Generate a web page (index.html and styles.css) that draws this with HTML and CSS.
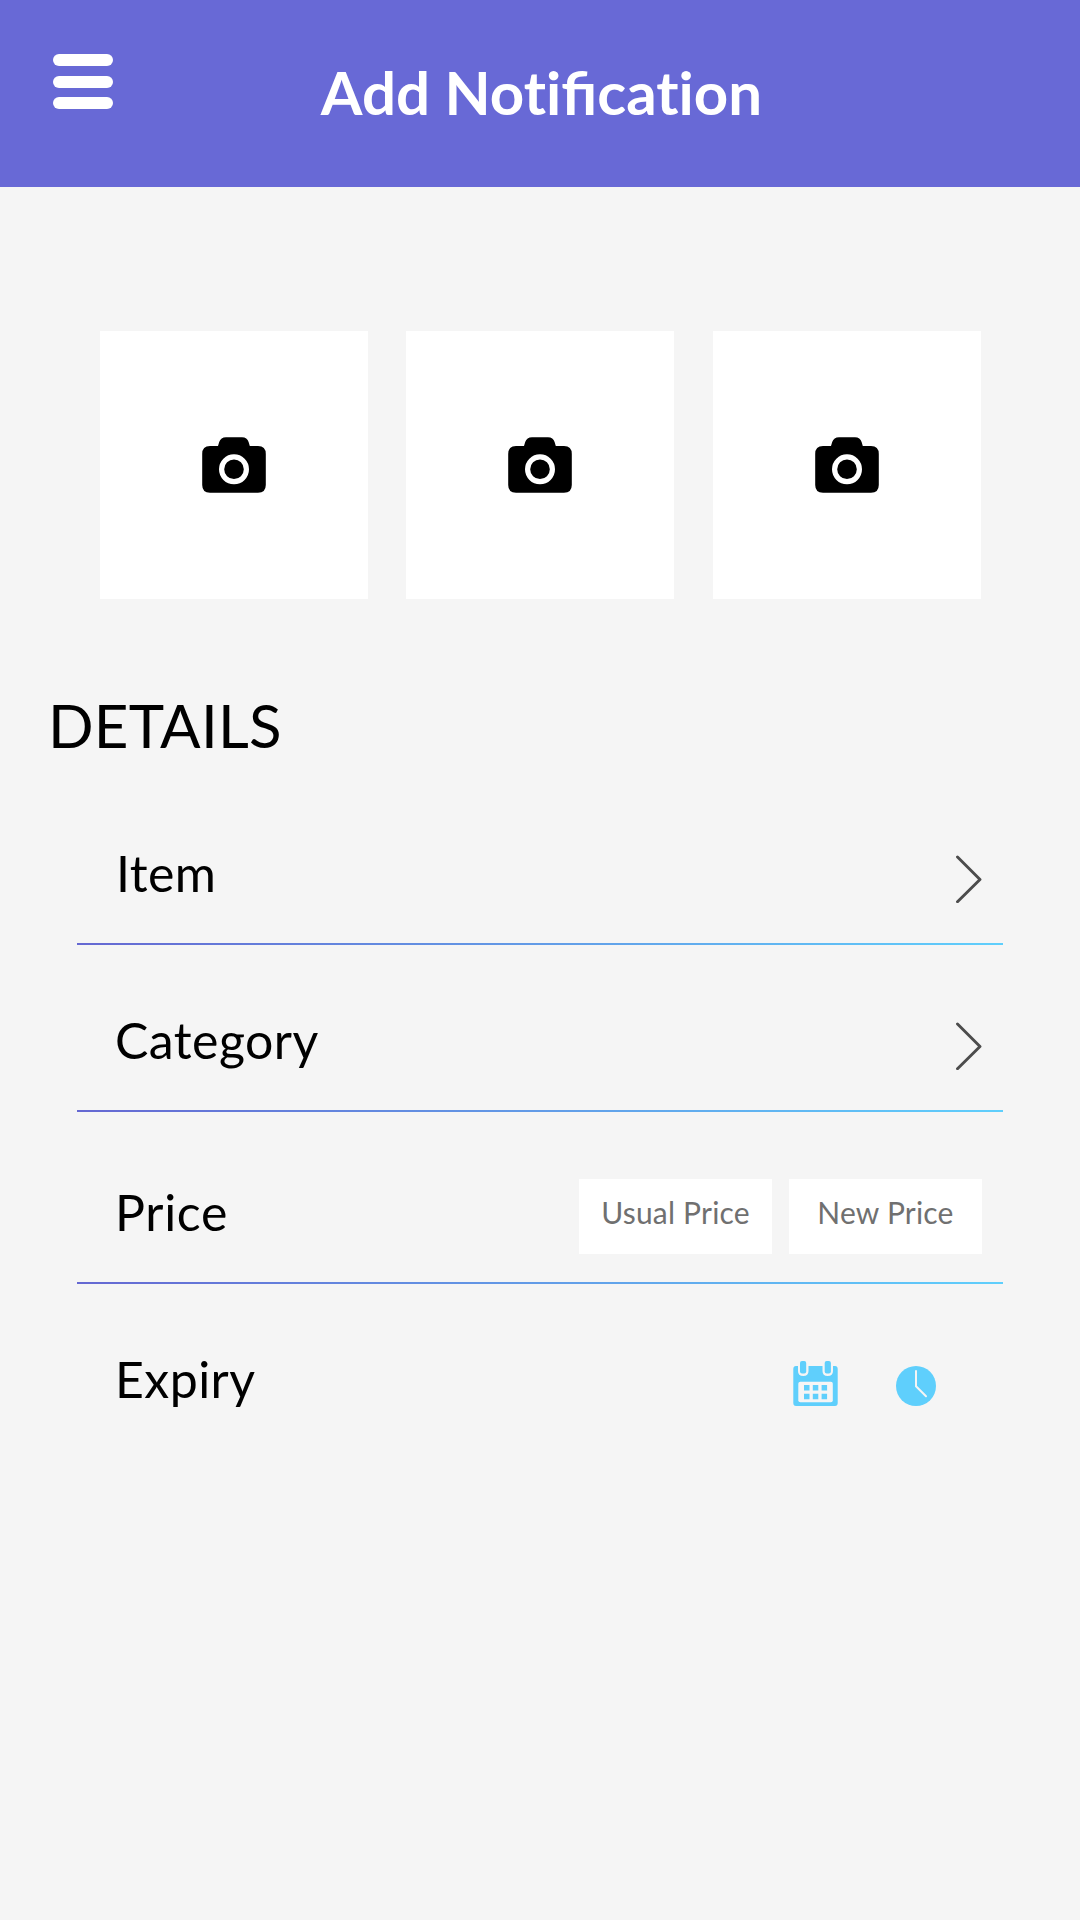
FILE: index.html
```html
<!DOCTYPE html>
<html lang="en">
<head>
<meta charset="utf-8">
<title>Add Notification</title>
<link rel="stylesheet" href="styles.css">
</head>
<body>
<svg class="symbols" aria-hidden="true">
  <symbol id="camera" viewBox="0 0 64 56">
    <path d="M8 9H16L17.200 5Q18.800 0.300 24 0.300H40Q45.200 0.300 46.600 5L47.800 9H56Q63.800 9 63.800 17V48Q63.800 55.700 56 55.700H8Q0.200 55.700 0.200 48V17Q0.200 9 8 9Z"/>
    <circle cx="32" cy="32.300" r="12.400" fill="none" stroke="#fff" stroke-width="5.200"/>
  </symbol>
  <symbol id="chevron" viewBox="0 0 26 48">
    <path d="M1.500 2 24 24.500 1.500 46.800" fill="none" stroke="#4c4c4c" stroke-width="2.900" stroke-linecap="round" stroke-linejoin="round"/>
  </symbol>
</svg>
<header class="header">
  <button class="menu" aria-label="Menu"><span class="menu-bar"></span><span class="menu-bar"></span><span class="menu-bar"></span></button>
  <h1 class="title">Add Not&zwnj;ificat&zwnj;ion</h1>
</header>
<main>
  <section class="photos">
    <button class="photo" aria-label="Add photo"><svg class="camera"><use href="#camera"/></svg></button>
    <button class="photo" aria-label="Add photo"><svg class="camera"><use href="#camera"/></svg></button>
    <button class="photo" aria-label="Add photo"><svg class="camera"><use href="#camera"/></svg></button>
  </section>
  <h2 class="heading">DETAILS</h2>
  <section class="rows">
    <div class="row row-item"><span class="label">Item</span><svg class="chevron"><use href="#chevron"/></svg></div>
    <div class="row row-category"><span class="label">Category</span><svg class="chevron"><use href="#chevron"/></svg></div>
    <div class="row row-price">
      <span class="label">Price</span>
      <div class="prices"><span class="price">Usual Price</span><span class="price">New Price</span></div>
    </div>
    <div class="row row-expiry">
      <span class="label">Expiry</span>
      <div class="pickers">
        <svg class="calendar" viewBox="0 0 45 45">
          <path fill="#5fcffc" d="M3 5H5V10Q5 15 10.200 15Q15.500 15 15.500 10V5H29.500V10Q29.500 15 34.700 15Q40 15 40 10V5H42Q44.700 5 44.700 8V42Q44.700 45 42 45H3Q0.300 45 0.300 42V8Q0.300 5 3 5Z"/>
          <rect x="7" y="0" width="6.200" height="12.500" rx="2" fill="#5fcffc"/>
          <rect x="31.700" y="0" width="6.200" height="12.500" rx="2" fill="#5fcffc"/>
          <rect x="5.300" y="20.700" width="34.500" height="20.500" rx="2" fill="#f5f5f5"/>
          <path fill="#5fcffc" d="M11 24h5.500v5.500H11zM19.800 24h5.500v5.500h-5.500zM28.600 24h5.500v5.500h-5.500zM11 32.700h5.500v5.500H11zM19.800 32.700h5.500v5.500h-5.500zM28.600 32.700h5.500v5.500h-5.500z"/>
        </svg>
        <svg class="clock" viewBox="0 0 40 40">
          <circle cx="20" cy="20" r="20" fill="#5fcffc"/>
          <path d="M20 5V20.300L30 30.300" fill="none" stroke="#f5f5f5" stroke-width="2" stroke-linecap="round" stroke-linejoin="round"/>
        </svg>
      </div>
    </div>
  </section>
</main>
</body>
</html>
```
FILE: styles.css
```css
* { box-sizing: border-box; }
body {
  margin: 0;
  min-height: 1920px;
  background: #f5f5f5;
  color: #000;
  font-family: Lato, sans-serif;
}
button { border: 0; padding: 0; font: inherit; color: inherit; }
svg { display: block; flex: none; }
.symbols { display: none; }

.header {
  display: grid;
  grid-template-columns: 60px 1fr 60px;
  height: 187px;
  padding: 0 53px;
  background: #6869d6;
}
.menu {
  display: flex;
  flex-direction: column;
  gap: 9.500px;
  height: 55px;
  margin-top: 54px;
  background: none;
}
.menu-bar { width: 60px; height: 12px; border-radius: 6px; background: #fff; }
.title {
  margin: 0;
  padding-left: 3px;
  color: #fff;
  font-size: 60px;
  font-weight: 700;
  line-height: 184px;
  text-align: center;
  white-space: nowrap;
}

.photos { display: flex; gap: 38px; padding: 144px 99px 0 100px; }
.photo {
  display: flex;
  justify-content: center;
  width: 268px;
  height: 268px;
  padding-top: 106px;
  background: #fff;
}
.photo:last-child { margin-left: 1px; }
.camera { width: 64px; height: 56px; }

.heading {
  margin: 90px 0 0 48px;
  font-size: 60px;
  font-weight: 400;
  line-height: 72px;
  letter-spacing: 0.2px;
}

.rows { margin: 0 77px; }
.row {
  display: flex;
  align-items: flex-end;
  justify-content: space-between;
  padding: 0 21px 42px 38px;
  background: linear-gradient(90deg, #6568d2, #5fcffc) bottom / 100% 2px no-repeat;
}
.row-item { height: 184px; padding-left: 39px; }
.row-category { height: 167px; }
.row-price { height: 172px; }
.row-expiry { height: 125px; padding: 0 67px 0 38px; background: none; }
.label { font-size: 50px; line-height: 60px; letter-spacing: 0.45px; }
.row-price .label { letter-spacing: 0.7px; }
.chevron { width: 26px; height: 48px; }
.prices { display: flex; gap: 17px; margin-bottom: -12px; }
.price {
  width: 193px;
  height: 75px;
  background: #fff;
  color: #707070;
  font-size: 30px;
  line-height: 67px;
  letter-spacing: 0.2px;
  text-align: center;
}
.pickers { display: flex; align-items: flex-end; gap: 58px; padding-bottom: 3px; }
.calendar { width: 45px; height: 45px; }
.clock { width: 40px; height: 40px; }
```
